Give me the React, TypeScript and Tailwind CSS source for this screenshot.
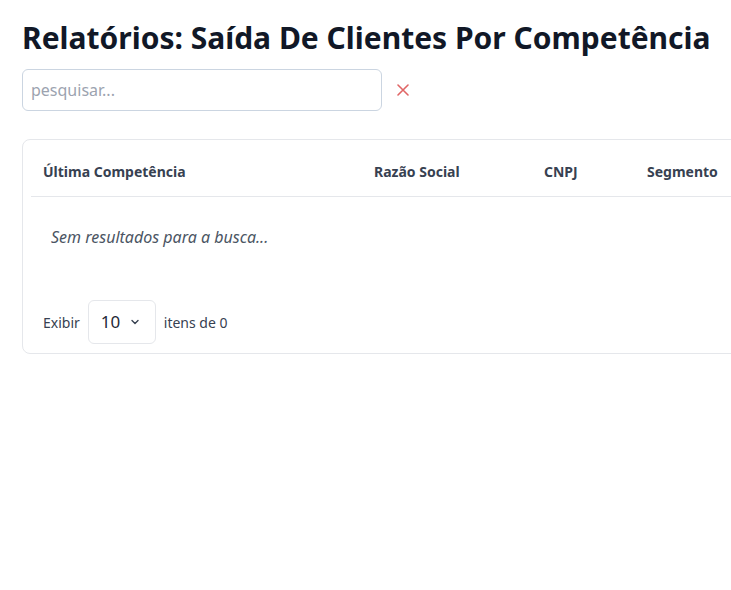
import React from "react";

export default function App() {
  return (
    <div className="w-[731px] h-[590px] overflow-hidden bg-white text-[#1f2937]" style={{ fontFamily: '"Noto Sans", sans-serif' }}>
      <div className="pl-[22px] pt-[18px]">
        <h1 className="text-[30px] leading-[40px] font-bold text-[#111827] whitespace-nowrap">Relatórios: Saída De Clientes Por Competência</h1>
        <div className="flex items-center mt-[11px]">
          <input
            className="w-[360px] h-[42px] border border-[#cbd5e1] rounded-md px-[8px] text-[16px] placeholder:text-[#9ca3af] outline-none"
            placeholder="pesquisar..."
          />
          <button className="ml-[15px] w-[12px] h-[12px] flex items-center justify-center text-[#e06666]">
            <svg width="12" height="12" viewBox="0 0 12 12" fill="none" stroke="currentColor" strokeWidth="1.6" strokeLinecap="round">
              <path d="M1 1L11 11M11 1L1 11" />
            </svg>
          </button>
        </div>
        <div className="mt-[28px] w-[780px] h-[215px] border border-[#e5e7eb] rounded-lg pt-[8px] px-[8px] flex flex-col">
          <div className="flex h-[49px] items-center pb-[2px] border-b border-[#e5e7eb] text-[14px] font-bold text-[#374151] whitespace-nowrap">
            <div className="w-[331px] px-3">Última Competência</div>
            <div className="w-[170px] px-3">Razão Social</div>
            <div className="w-[103px] px-3">CNPJ</div>
            <div className="w-[140px] px-3">Segmento</div>
          </div>
          <div className="h-[82px] flex items-start pt-[28px] pl-[20px] text-[16px] italic text-[#4b5563]">
            Sem resultados para a busca...
          </div>
          <div className="flex items-center pl-[12px] mt-[21px] text-[14px] text-[#374151]">
            <span>Exibir</span>
            <div className="ml-[8px] w-[68px] h-[44px] border border-[#e5e7eb] rounded-md flex items-center pl-[12px] text-[17px] text-[#1f2937]">
              <span>10</span>
              <svg className="ml-[10px]" width="10" height="10" viewBox="0 0 10 10" fill="none" stroke="#374151" strokeWidth="1.4" strokeLinecap="round" strokeLinejoin="round">
                <path d="M2 3.5L5 6.5L8 3.5" />
              </svg>
            </div>
            <span className="ml-[8px]">itens de 0</span>
          </div>
        </div>
      </div>
    </div>
  );
}
